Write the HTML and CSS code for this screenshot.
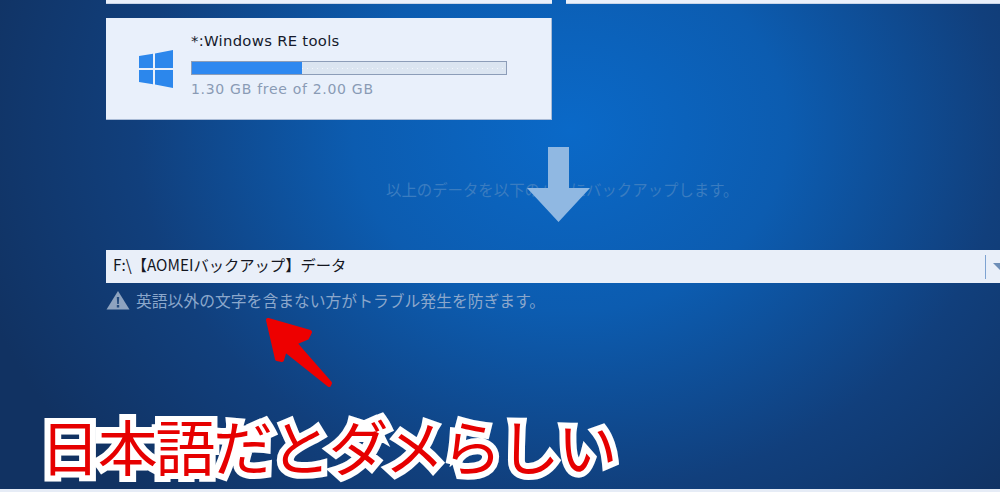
FILE: index.html
```html
<!DOCTYPE html>
<html lang="ja">
<head>
<meta charset="utf-8">
<title>AOMEI Backup</title>
<link rel="stylesheet" href="styles.css">
</head>
<body>
<main class="screen">
  <div class="top-row">
    <div class="stub stub-left"></div>
    <div class="stub stub-right"></div>
  </div>
  <section class="card">
    <svg class="win" viewBox="0 0 34 38" width="34" height="38" aria-hidden="true">
      <path d="M0 6 14 3.800V18H0Z M16 3.400 34 0V18H16Z M0 20H14V34.200L0 32Z M16 20H34V38L16 34.600Z"/>
    </svg>
    <div class="info">
      <div class="name">*:Windows RE tools</div>
      <div class="bar"><div class="fill"></div></div>
      <div class="free">1.30 GB free of 2.00 GB</div>
    </div>
  </section>
  <p class="caption">以上のデータを以下のパスにバックアップします。</p>
  <div class="path">
    <span class="path-text">F:\【AOMEIバックアップ】データ</span>
    <span class="sep"></span>
    <span class="caret"></span>
  </div>
  <div class="warn">
    <svg class="warn-icon" viewBox="0 0 24 20" width="24" height="20" aria-hidden="true">
      <path class="tri" d="M12 1 23.500 19.500H.5Z"/>
      <path class="mark" d="M10.800 7h2.400l-.4 7h-1.600Zm0 8h2.400v2.500h-2.400Z"/>
    </svg>
    <span>英語以外の文字を含まない方がトラブル発生を防ぎます。</span>
  </div>

  <svg class="down-arrow" viewBox="0 0 63 75" width="63" height="75" aria-hidden="true">
    <path d="M21 0H42V41H63L31.500 75 0 41H21Z"/>
  </svg>
  <svg class="red-arrow" viewBox="0 0 80 80" width="80" height="80" aria-hidden="true">
    <path d="M4 4 46 16 43 22 31 27 66 67 65 69 21 34 18 44 13 43Z"/>
  </svg>
  <div class="note">日本語だとダメらしい</div>
  <div class="strip"></div>
</main>
</body>
</html>
```
FILE: styles.css
```css
* { box-sizing: border-box; }
html, body { margin: 0; height: 100%; }
body { overflow: hidden; }

.screen {
  position: relative;
  width: 1000px;
  height: 492px;
  overflow: hidden;
  padding-left: 106px;
  font-family: "Liberation Sans", "Noto Sans CJK JP", sans-serif;
  background: radial-gradient(ellipse 620px 520px at 570px 130px, #0a69c8 0%, #0c5cb0 35%, #113f7c 70%, #113262 100%);
}

.top-row { display: flex; gap: 14px; height: 4px; }
.stub { background: #eaf0fb; border-bottom: 1px solid #c9d5e8; }
.stub-left { width: 446px; }
.stub-right { flex: 1; }

.card {
  display: flex;
  align-items: center;
  width: 446px;
  height: 102px;
  margin-top: 14px;
  padding-left: 33px;
  background: #e9f0fb;
  border-right: 1px solid #a9bbd6;
  border-bottom: 1px solid #a9bbd6;
}
.win { fill: #2c87ec; margin-right: 18px; }
.info { display: flex; flex-direction: column; margin-top: -7px; }
.name { font-family: "DejaVu Sans", sans-serif; font-size: 14.800px; line-height: 18px; letter-spacing: .3px; color: #151a2c; }
.bar {
  width: 316px;
  height: 14px;
  margin-top: 11px;
  background: linear-gradient(90deg, #f2f6fb 1px, transparent 1px) 0 50% / 5px 1px repeat-x, #dbe5f1;
  border: 1px solid #8c9db8;
}
.fill { width: 35%; height: 100%; background: #2e88f0; }
.free { font-family: "DejaVu Sans", sans-serif; font-size: 14px; line-height: 18px; margin-top: 5px; color: #8a9bb5; letter-spacing: .7px; }

.caption {
  margin: 60px 0 0 280px;
  height: 18px;
  font-family: "Noto Sans CJK JP", sans-serif;
  font-size: 15.400px;
  line-height: 18px;
  white-space: nowrap;
  color: #3a7cc0;
}

.path {
  display: flex;
  align-items: center;
  height: 33px;
  margin-top: 52px;
  padding-left: 7px;
  background: #e9eff9;
}
.path-text { flex: 1; font-family: "Noto Sans CJK JP", "DejaVu Sans", sans-serif; font-size: 15.300px; line-height: 28px; margin-top: -6px; color: #14161f; white-space: nowrap; }
.sep { width: 1px; height: 24px; background: #7ea3d2; margin-right: 7px; }
.caret {
  flex-shrink: 0;
  width: 0;
  height: 0;
  margin-right: -7px;
  border-left: 7px solid transparent;
  border-right: 7px solid transparent;
  border-top: 7px solid #6e8eb8;
}

.warn {
  display: flex;
  align-items: center;
  gap: 6px;
  height: 22px;
  margin-top: 6px;
  font-family: "Noto Sans CJK JP", sans-serif;
  font-size: 15.800px;
  color: #8ba7cb;
  white-space: nowrap;
}
.tri { fill: #8ea3bf; }
.mark { fill: #234a7d; }

.down-arrow { position: absolute; left: 527px; top: 147px; fill: #90b8e2; }
.red-arrow {
  position: absolute;
  left: 264px;
  top: 316px;
  fill: #ee0000;
  stroke: #ee0000;
  stroke-width: 4;
  stroke-linejoin: round;
}
.note {
  position: absolute;
  left: 40px;
  top: 412px;
  font-family: "Noto Sans CJK JP", sans-serif;
  font-weight: 400;
  font-size: 60px;
  letter-spacing: -2.300px;
  line-height: 66px;
  white-space: nowrap;
  color: #e60000;
  -webkit-text-stroke: 12px #ffffff;
  paint-order: stroke fill;
}
.strip { position: absolute; left: 0; right: 0; bottom: 0; height: 3px; background: #e6ecf6; }
```
